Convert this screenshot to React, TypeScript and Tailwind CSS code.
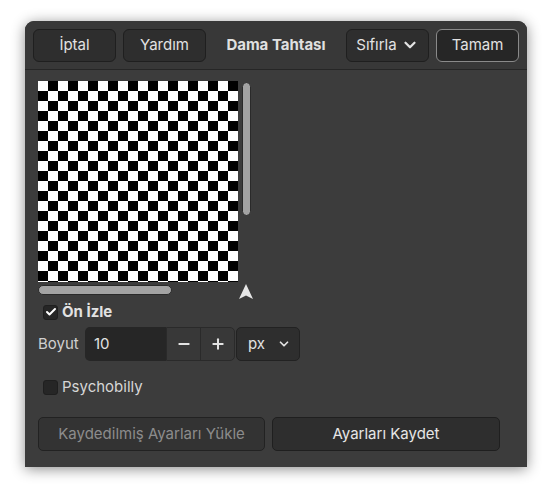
import { Check, ChevronDown, Minus, Plus } from 'lucide-react';

const font = { fontFamily: 'Inter, "Noto Sans", "Liberation Sans", sans-serif' };

function HeaderButton({ children, focused }: { children: React.ReactNode; focused?: boolean }) {
  return (
    <button
      className={
        'flex h-[33px] w-[83px] items-center justify-center gap-1 rounded-[6px] border text-[15px] text-[#e2e2e2] ' +
        (focused ? 'border-[#8a8a8a] bg-[#262626]' : 'border-[#1f1f1f] bg-[#2e2e2e]')
      }
    >
      {children}
    </button>
  );
}

function Checkbox({ checked }: { checked?: boolean }) {
  return (
    <span className="flex h-[15px] w-[15px] items-center justify-center rounded-[3px] border border-[#1f1f1f] bg-[#262626]">
      {checked && <Check className="h-[12px] w-[12px] text-white" strokeWidth={4} />}
    </span>
  );
}

function Checker() {
  return (
    <svg width="200" height="201" className="block">
      <defs>
        <pattern id="chk" width="20" height="20" patternUnits="userSpaceOnUse">
          <rect width="20" height="20" fill="#fff" />
          <rect x="10" width="10" height="10" fill="#000" />
          <rect y="10" width="10" height="10" fill="#000" />
        </pattern>
      </defs>
      <rect width="200" height="201" fill="url(#chk)" />
    </svg>
  );
}

export default function App() {
  return (
    <div className="h-[495px] w-[552px] bg-white pl-[25px] pt-[21px]" style={font}>
      <div className="w-[502px] overflow-hidden rounded-t-[9px] bg-[#3c3c3c] shadow-[0_2px_14px_rgba(0,0,0,0.45)]">
        {/* Header */}
        <div className="flex h-[49px] items-center gap-[7px] border-b border-[#262626] bg-[#383838] px-[8px]">
          <HeaderButton>İptal</HeaderButton>
          <HeaderButton>Yardım</HeaderButton>
          <div className="flex-1 text-center text-[15px] font-bold text-[#e0e0e0]">Dama Tahtası</div>
          <HeaderButton>
            Sıfırla <ChevronDown className="h-[18px] w-[18px]" strokeWidth={3} />
          </HeaderButton>
          <HeaderButton focused>Tamam</HeaderButton>
        </div>

        {/* Body */}
        <div className="px-[13px] pb-[16px] pt-[11px]">
          <div className="flex gap-[4px]">
            <Checker />
            <div className="mt-[1px] h-[134px] w-[9px] rounded-full border border-[#2a2a2a] bg-[#a3a3a3]" />
          </div>
          <div className="flex h-[19px] items-start">
            <div className="mt-[3px] h-[10px] w-[134px] rounded-full border border-[#2a2a2a] bg-[#a3a3a3]" />
            <svg width="18" height="18" viewBox="0 0 18 18" className="ml-[65px] mt-[1px]">
              <path d="M9 1 L16 16 L9 12.5 L2 16 Z" fill="#e6e6e6" />
            </svg>
          </div>

          <div className="flex h-[22px] items-center gap-[4px] pl-[5px] text-[15px] font-bold text-[#e2e2e2]">
            <Checkbox checked />
            <span>Ön İzle</span>
          </div>

          <div className="mt-[4px] flex items-center">
            <span className="w-[47px] text-[15px] text-[#d0d0d0]">Boyut</span>
            <div className="flex h-[34px] w-[81px] items-center rounded-l-[5px] bg-[#262626] pl-[9px] text-[15px] text-[#e2e2e2]">
              10
            </div>
            <div className="flex h-[34px] overflow-hidden rounded-r-[5px] border border-[#2a2a2a] bg-[#383838]">
              <div className="flex w-[34px] items-center justify-center border-r border-[#2a2a2a]">
                <Minus className="h-[16px] w-[16px] text-[#e2e2e2]" strokeWidth={3} />
              </div>
              <div className="flex w-[33px] items-center justify-center">
                <Plus className="h-[16px] w-[16px] text-[#e2e2e2]" strokeWidth={3} />
              </div>
            </div>
            <div className="ml-[1px] flex h-[34px] w-[64px] items-center justify-between rounded-[5px] border border-[#222] bg-[#2e2e2e] pl-[11px] pr-[8px] text-[15px] text-[#e2e2e2]">
              px
              <ChevronDown className="h-[14px] w-[14px]" strokeWidth={3} />
            </div>
          </div>

          <div className="mt-[15px] flex h-[22px] items-center gap-[4px] pl-[5px] text-[15px] text-[#d6d6d6]">
            <Checkbox />
            <span>Psychobilly</span>
          </div>

          <div className="mt-[19px] flex gap-[7px]">
            <button className="h-[34px] w-[227px] rounded-[5px] border border-[#222] bg-[#333333] text-[15px] text-[#8c8c8c]">
              Kaydedilmiş Ayarları Yükle
            </button>
            <button className="h-[34px] w-[228px] rounded-[5px] border border-[#1f1f1f] bg-[#2e2e2e] text-[15px] text-[#e6e6e6]">
              Ayarları Kaydet
            </button>
          </div>
        </div>
      </div>
    </div>
  );
}
